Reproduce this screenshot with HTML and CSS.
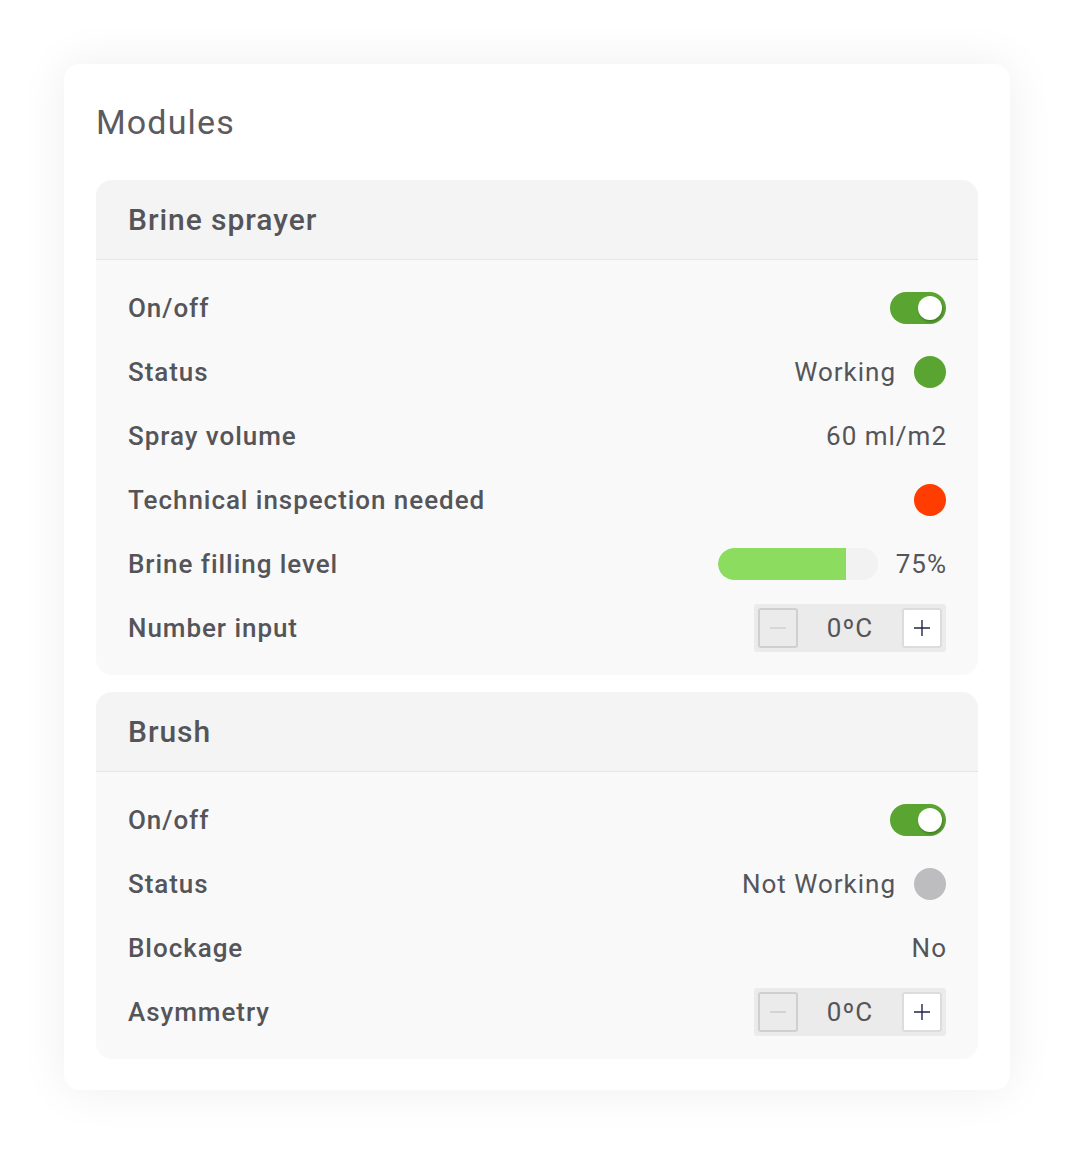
FILE: index.html
```html
<!DOCTYPE html>
<html lang="en">
<head>
<meta charset="utf-8">
<title>Modules</title>
<link rel="stylesheet" href="styles.css">
</head>
<body>
<div class="page">
  <div class="card">
    <h1 class="title">Modules</h1>
    <div class="modules">
      <section class="module">
        <div class="module-head">Brine sprayer</div>
        <div class="module-body">
          <div class="row">
            <span class="label">On/off</span>
            <span class="toggle"><span class="knob"></span></span>
          </div>
          <div class="row">
            <span class="label">Status</span>
            <span class="value"><span class="txt">Working</span> <span class="dot dot-green"></span></span>
          </div>
          <div class="row">
            <span class="label">Spray volume</span>
            <span class="value"><span class="txt txt-end">60 ml/m2</span></span>
          </div>
          <div class="row">
            <span class="label">Technical inspection needed</span>
            <span class="value"><span class="dot dot-red"></span></span>
          </div>
          <div class="row">
            <span class="label">Brine filling level</span>
            <span class="value"><span class="bar"><span class="bar-fill" style="width: 80%"></span></span> <span class="txt txt-end">75%</span></span>
          </div>
          <div class="row">
            <span class="label">Number input</span>
            <span class="stepper">
              <span class="step step-minus"><svg width="20" height="20" viewBox="0 0 20 20"><path d="M2 10H18" stroke="#c4c4c4" stroke-width="1.2"/></svg></span>
              <span class="step-value">0ºC</span>
              <span class="step step-plus"><svg width="20" height="20" viewBox="0 0 20 20"><path d="M2 10H18M10 2V18" stroke="#22244a" stroke-width="1.4"/></svg></span>
            </span>
          </div>
        </div>
      </section>
      <section class="module">
        <div class="module-head">Brush</div>
        <div class="module-body">
          <div class="row">
            <span class="label">On/off</span>
            <span class="toggle"><span class="knob"></span></span>
          </div>
          <div class="row">
            <span class="label">Status</span>
            <span class="value"><span class="txt">Not Working</span> <span class="dot dot-gray"></span></span>
          </div>
          <div class="row">
            <span class="label">Blockage</span>
            <span class="value"><span class="txt txt-end">No</span></span>
          </div>
          <div class="row">
            <span class="label">Asymmetry</span>
            <span class="stepper">
              <span class="step step-minus"><svg width="20" height="20" viewBox="0 0 20 20"><path d="M2 10H18" stroke="#c4c4c4" stroke-width="1.2"/></svg></span>
              <span class="step-value">0ºC</span>
              <span class="step step-plus"><svg width="20" height="20" viewBox="0 0 20 20"><path d="M2 10H18M10 2V18" stroke="#22244a" stroke-width="1.4"/></svg></span>
            </span>
          </div>
        </div>
      </section>
    </div>
  </div>
</div>
</body>
</html>
```

FILE: styles.css
```css
* { box-sizing: border-box; }
html, body {
  margin: 0;
  padding: 0;
  background: #ffffff;
  font-family: Roboto, "Liberation Sans", sans-serif;
  color: #555559;
}
.page {
  padding: 64px;
}
.card {
  width: 946px;
  background: #ffffff;
  border-radius: 16px;
  box-shadow: 0 0 48px rgba(0, 0, 0, 0.07);
  padding: 32px 32px 31px 32px;
}
.title {
  margin: 0 0 32px 0;
  font-size: 34px;
  line-height: 52px;
  font-weight: 400;
  letter-spacing: 1.15px;
  color: #5b5b60;
  padding-left: 0;
}
.modules {
  display: flex;
  flex-direction: column;
  gap: 17px;
}
.module {
  background: #f9f9f9;
  border-radius: 16px;
  overflow: hidden;
}
.module-head {
  height: 80px;
  background: #f4f4f4;
  border-bottom: 1px solid #e6e6e6;
  display: flex;
  align-items: center;
  padding: 0 32px 1px 32px;
  font-size: 30px;
  font-weight: 500;
  letter-spacing: 0.95px;
  color: #555559;
}
.module-body {
  padding: 16px 32px 15px 32px;
}
.row {
  height: 64px;
  display: flex;
  align-items: center;
  justify-content: space-between;
}
.label {
  font-size: 26px;
  font-weight: 500;
  letter-spacing: 0.95px;
  color: #555559;
}
.value {
  display: flex;
  align-items: center;
  gap: 18px;
  font-size: 26px;
  font-weight: 400;
  letter-spacing: 1px;
  color: #555559;
}
.txt-end {
  margin-right: -1px;
}
.toggle {
  width: 56px;
  height: 32px;
  border-radius: 16px;
  background: #5aa532;
  display: flex;
  align-items: center;
  justify-content: flex-end;
  padding-right: 4px;
}
.knob {
  width: 24px;
  height: 24px;
  border-radius: 50%;
  background: #ffffff;
  box-shadow: 1px 2px 3px rgba(0, 0, 0, 0.25);
}
.dot {
  width: 32px;
  height: 32px;
  border-radius: 50%;
  display: inline-block;
}
.dot-green { background: #5aa532; }
.dot-red { background: #ff3d00; }
.dot-gray { background: #bdbdbf; }
.bar {
  width: 160px;
  height: 32px;
  border-radius: 16px;
  background: #f2f2f2;
  overflow: hidden;
  display: flex;
}
.bar-fill {
  height: 100%;
  background: #8cdc5f;
  border-radius: 16px 0 0 16px;
}
.stepper {
  width: 192px;
  height: 48px;
  background: #ebebeb;
  border-radius: 3px;
  display: flex;
  align-items: center;
  justify-content: space-between;
  padding: 0 4px;
}
.step {
  width: 40px;
  height: 40px;
  border-radius: 3px;
  display: flex;
  align-items: center;
  justify-content: center;
}
.step-minus {
  background: #ebebeb;
  border: 2px solid #cfcfcf;
}
.step-plus {
  background: #ffffff;
  border: 2px solid #dcdcdc;
}
.step-value {
  font-size: 26px;
  letter-spacing: 1px;
  color: #555559;
}
```
